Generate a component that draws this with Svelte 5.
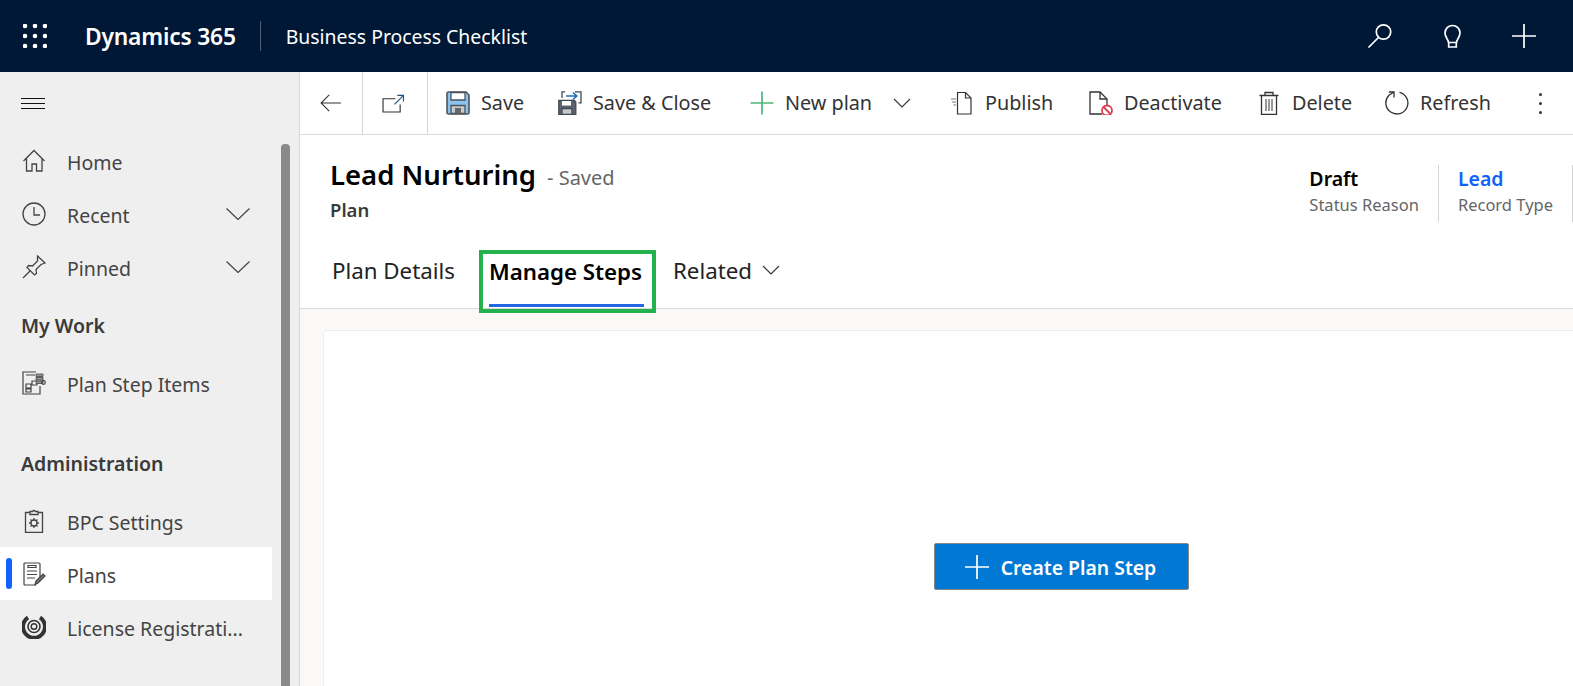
<script>
  // w = width of the toolbar button, so the labels land where the ribbon puts them
  const tools = [
    { id: 'save', label: 'Save', w: 112 },
    { id: 'saveclose', label: 'Save & Close', w: 192 },
    { id: 'plus', label: 'New plan', w: 200, caret: true },
    { id: 'publish', label: 'Publish', w: 139 },
    { id: 'deactivate', label: 'Deactivate', w: 168 },
    { id: 'delete', label: 'Delete', w: 128 },
    { id: 'refresh', label: 'Refresh', w: 120 }
  ];
</script>

{#snippet toolIcon(id)}
  <svg class="ticon" viewBox="0 0 24 24" fill="none" stroke="#333" stroke-width="1.3">
    {#if id === 'save'}
      <path d="M1 2.500Q1 1 2.500 1H20l3 3v17.500q0 1.500-1.500 1.500H2.500Q1 23 1 21.500Z" fill="#8cc3ee" stroke="#4a545e" stroke-width="1.600" />
      <path d="M5 1.500h14v7.500H5z" fill="#fff" stroke="#4a545e" />
      <path d="M5 22.500v-8h14v8z" fill="#c9c9c9" stroke="#4a545e" />
      <path d="M9 17h6v5.500H9z" fill="#666" stroke="none" />
    {:else if id === 'saveclose'}
      <path d="M0.800 9.500h15.500l1.500 1.500v12.500H0.800z" fill="#5d6670" stroke="#3f4a55" />
      <path d="M4 10h9v4.500H4z" fill="#fff" stroke="none" />
      <path d="M4 23.500v-6h10v6z" fill="#c9c9c9" stroke="#3f4a55" />
      <path d="M4 7V0.800h3M17 0.800h6v11h-2.500" stroke="#3f4a55" />
      <path d="M8 5h10M15 1.500 18.800 5 15 8.500" stroke="#1f6fb5" stroke-width="1.600" />
    {:else if id === 'plus'}
      <path d="M12 0.500v23M0.500 12h23" stroke="#4cb878" stroke-width="1.700" />
    {:else if id === 'publish'}
      <path d="M7.500 1.500h8L21 7v16H7.500z" stroke-width="1.200" />
      <path d="M15.500 1.500V7H21" stroke-width="1.200" />
      <path d="M1 8h5M2 11h4M3.500 14H6" stroke-width="1" stroke="#777" />
    {:else if id === 'deactivate'}
      <path d="M13 23H1V1h10l7 7v8" stroke-width="1.300" />
      <path d="M11 1v7h7" stroke-width="1.300" />
      <circle cx="18" cy="19.500" r="5" fill="#fff" stroke="#d9414f" stroke-width="1.800" />
      <path d="m14.500 16 7 7" stroke="#d9414f" stroke-width="1.800" />
    {:else if id === 'delete'}
      <path d="M2.500 4.500h19M8 4.500V1.500h8v3M4.500 4.500v19h15v-19" stroke-width="1.300" />
      <path d="M9 8v12M12 8v12M15 8v12" stroke-width="1" />
    {:else if id === 'refresh'}
      <path d="M14.500 1.300a11 11 0 1 1-10.500 3L9 1" stroke-width="1.300" />
      <path d="M3.800 1H9v5.500" stroke-width="1.300" />
    {/if}
  </svg>
{/snippet}

<div class="page">
  <header class="topbar">
    <svg class="waffle" viewBox="0 0 24 24" fill="#fff">
      {#each [2, 12, 22] as y}
        {#each [2, 12, 22] as x}
          <circle cx={x} cy={y} r="2.300" />
        {/each}
      {/each}
    </svg>
    <span class="brand">Dynamics 365</span>
    <span class="sep"></span>
    <span class="appname">Business Process Checklist</span>
    <div class="topicons">
      <svg viewBox="0 0 26 26" fill="none" stroke="#fff" stroke-width="1.700">
        <circle cx="16.500" cy="9" r="7.200" />
        <path d="M11.500 14.500 1.500 24.500" />
      </svg>
      <svg viewBox="0 0 26 26" fill="none" stroke="#fff" stroke-width="1.700">
        <path d="M9.500 19.500c0-3-3.500-5-3.500-9.500a7.500 7.500 0 0 1 15 0c0 4.500-3.500 6.500-3.500 9.500zM9.700 19.500v4.500h7.600v-4.500" />
      </svg>
      <svg viewBox="0 0 26 26" fill="none" stroke="#fff" stroke-width="1.700">
        <path d="M13 1v24M1 13h24" />
      </svg>
    </div>
  </header>

  <div class="body">
    <nav class="side">
      <div class="burger"><span></span><span></span><span></span></div>
      <a class="row">
        <svg class="nicon" viewBox="0 0 24 24" fill="none" stroke="#444" stroke-width="1.300">
          <path d="M1.500 12 12 1.500 22.500 12M4.500 9.500V22H10v-7h4.500v7H20V9.500" />
        </svg>
        <span>Home</span>
      </a>
      <a class="row">
        <svg class="nicon" viewBox="0 0 24 24" fill="none" stroke="#444" stroke-width="1.300">
          <circle cx="12" cy="12" r="11" />
          <path d="M12 5v8h6" />
        </svg>
        <span>Recent</span>
        <svg class="chev" viewBox="0 0 24 12" fill="none" stroke="#444" stroke-width="1.200"><path d="m0.500 0.500 11.500 11 11.500-11" /></svg>
      </a>
      <a class="row">
        <svg class="nicon" viewBox="0 0 24 24" fill="none" stroke="#444" stroke-width="1.300">
          <path d="M15.500 1 23 8l-4 1.500-5 5 0.500 4-2 1.500L5 12.500 6.500 10.500l4 .500 5-5zM8 16 1 23" />
        </svg>
        <span>Pinned</span>
        <svg class="chev" viewBox="0 0 24 12" fill="none" stroke="#444" stroke-width="1.200"><path d="m0.500 0.500 11.500 11 11.500-11" /></svg>
      </a>

      <h3 class="group first">My Work</h3>
      <a class="row">
        <svg class="nicon" viewBox="0 0 24 24" fill="none" stroke="#444" stroke-width="1.200">
          <path d="M18 15v8H1V1h13" />
          <path d="M4 4h9M4 13h5v4H4zM10 10h5v4h-5zM4 18h5v3H4z" />
          <path d="M14 3h7v2.500h-7zM14 6.500h7V9h-7zM14 10h7v2.500h-7z" fill="#999" stroke-width="0.800" />
          <circle cx="21.500" cy="11.500" r="1.800" />
        </svg>
        <span>Plan Step Items</span>
      </a>

      <h3 class="group second">Administration</h3>
      <a class="row">
        <svg class="nicon" viewBox="0 0 24 24" fill="none" stroke="#444" stroke-width="1.300">
          <path d="M7.500 3.500H3.500v20h17v-20h-4M8 5.500V2.500h2.500q1.500-2 3 0H16v3z" />
          <circle cx="12" cy="14" r="3" />
          <path d="M12 9v2M12 17v2M7 14h2M15 14h2M8.500 10.500l1.500 1.500M14 16l1.500 1.500M15.500 10.500 14 12M10 16l-1.500 1.500" />
        </svg>
        <span>BPC Settings</span>
      </a>
      <a class="row active">
        <i class="marker"></i>
        <svg class="nicon" viewBox="0 0 24 24" fill="none" stroke="#444" stroke-width="1.200">
          <path d="M14 23H3q-1 0-1-1V2q0-1 1-1h14q1 0 1 1v13" />
          <path d="M6 3.500h8v2H6zM5 9h10M5 12.500h10M5 16h8" />
          <path d="m13 22.500 1-3.500 7-7 2 2-7 7z" fill="#777" />
        </svg>
        <span>Plans</span>
      </a>
      <a class="row">
        <svg class="nicon" viewBox="0 0 24 24" fill="none">
          <path d="M6 2.500a11 11 0 1 0 12 0" stroke="#333" stroke-width="4" />
          <circle cx="12" cy="11.500" r="6" stroke="#333" stroke-width="1.600" />
          <circle cx="12" cy="11.500" r="2.800" stroke="#333" stroke-width="1.400" />
        </svg>
        <span>License Registrati...</span>
      </a>
      <div class="thumb"></div>
    </nav>

    <main class="main">
      <div class="toolbar">
        <button class="nav back">
          <svg viewBox="0 0 24 20" fill="none" stroke="#333" stroke-width="1.200" width="22" height="18"><path d="M23 10H1M10 1 1 10l9 9" /></svg>
        </button>
        <button class="nav popout">
          <svg viewBox="0 0 24 20" fill="none" stroke="#333" stroke-width="1.200" width="23" height="19"><path d="M14 5H1v14h18v-8" /><path d="M13 11 22 2" stroke="#1f4f7e" /><path d="M16 1.500h6.500V8" stroke="#1f4f7e" /></svg>
        </button>
        <div class="tools">
          {#each tools as t}
            <button class="tool" style="width: {t.w}px">
              {@render toolIcon(t.id)}
              <span>{t.label}</span>
              {#if t.caret}
                <svg class="caret" viewBox="0 0 18 10" fill="none" stroke="#333" stroke-width="1.100"><path d="m1 1 8 8 8-8" /></svg>
              {/if}
            </button>
          {/each}
        </div>
        <div class="more"><i></i><i></i><i></i></div>
      </div>

      <section class="formhead">
        <div class="titles">
          <div class="titleline"><h1>Lead Nurturing</h1><span class="saved">- Saved</span></div>
          <div class="entity">Plan</div>
        </div>
        <div class="fields">
          <div class="field">
            <strong>Draft</strong>
            <span>Status Reason</span>
          </div>
          <div class="field">
            <strong class="link">Lead</strong>
            <span>Record Type</span>
          </div>
        </div>
      </section>

      <div class="tabs">
        <div class="tab">Plan Details</div>
        <div class="tab current">Manage Steps<b></b></div>
        <div class="tab related">Related
          <svg viewBox="0 0 18 10" fill="none" stroke="#333" stroke-width="1.100" width="18" height="10"><path d="m1 1 8 8 8-8" /></svg>
        </div>
      </div>

      <div class="canvas">
        <div class="card">
          <button class="create">
            <svg viewBox="0 0 24 24" fill="none" stroke="#fff" stroke-width="1.700" width="24" height="24"><path d="M12 0v24M0 12h24" /></svg>
            <span>Create Plan Step</span>
          </button>
        </div>
      </div>
    </main>
  </div>
</div>

<style>
  :global(body) {
    margin: 0;
    overflow: hidden;
    font-family: "Noto Sans", "Open Sans", sans-serif;
  }
  .page {
    width: 1573px;
    height: 686px;
    display: flex;
    flex-direction: column;
    overflow: hidden;
  }
  .topbar {
    height: 72px;
    flex: none;
    background: #001836;
    color: #fff;
    display: flex;
    align-items: center;
  }
  .waffle {
    width: 24px;
    height: 24px;
    margin-left: 23px;
    margin-right: 38px;
  }
  .brand {
    font-size: 22.800px;
    font-weight: 600;
    letter-spacing: -0.2px;
  }
  .sep {
    width: 1px;
    height: 30px;
    background: #4d5d74;
    margin: 0 25px 0 24px;
  }
  .appname {
    font-size: 19.400px;
  }
  .topicons {
    margin-left: auto;
    display: flex;
    gap: 46px;
    margin-right: 36px;
  }
  .topicons svg {
    width: 26px;
    height: 26px;
  }
  .body {
    flex: 1;
    display: flex;
    min-height: 0;
  }
  .side {
    width: 299px;
    flex: none;
    background: #efefef;
    border-right: 1px solid #d8d8d8;
    position: relative;
    color: #444;
  }
  .burger {
    height: 62px;
    padding-left: 21px;
    display: flex;
    flex-direction: column;
    justify-content: center;
    gap: 4px;
  }
  .burger span {
    display: block;
    width: 24px;
    height: 1px;
    background: #111;
  }
  .row {
    height: 53px;
    width: 272px;
    display: flex;
    align-items: center;
    font-size: 19.500px;
    position: relative;
    color: #444;
  }
  .row span {
    padding-top: 3px;
  }
  .nicon {
    width: 24px;
    height: 24px;
    margin-left: 22px;
    margin-right: 21px;
    flex: none;
  }
  .chev {
    width: 24px;
    height: 12px;
    margin-left: auto;
    margin-right: 22px;
  }
  .group {
    margin: 0;
    font-size: 19.500px;
    font-weight: 600;
    color: #3a3a3a;
    padding-left: 21px;
    line-height: 27px;
  }
  .first {
    padding-top: 19px;
    padding-bottom: 17px;
  }
  .second {
    padding-top: 41px;
    padding-bottom: 17px;
  }
  .active {
    background: #fff;
  }
  .marker {
    position: absolute;
    left: 6px;
    top: 11px;
    width: 6px;
    height: 31px;
    border-radius: 3px;
    background: #0f62fe;
  }
  .thumb {
    position: absolute;
    left: 281px;
    top: 72px;
    bottom: -4px;
    width: 9px;
    border-radius: 4px 4px 0 0;
    background: #8a8a8a;
  }
  .main {
    flex: 1;
    min-width: 0;
    display: flex;
    flex-direction: column;
    background: #fff;
  }
  button {
    font: inherit;
    background: none;
    border: 0;
    padding: 0;
    color: inherit;
  }
  .toolbar {
    height: 62px;
    flex: none;
    box-sizing: content-box;
    border-bottom: 1px solid #dcdcdc;
    display: flex;
    align-items: stretch;
    color: #333;
  }
  .nav {
    display: flex;
    align-items: center;
    justify-content: center;
    border-right: 1px solid #d4d4d4;
  }
  .back {
    width: 63px;
  }
  .popout {
    width: 65px;
    padding-right: 3px;
  }
  .tools {
    display: flex;
    padding-left: 18px;
  }
  .tool {
    display: flex;
    align-items: center;
    font-size: 19.800px;
    white-space: nowrap;
  }
  .tool span {
    padding-bottom: 2px;
  }
  .ticon {
    width: 24px;
    height: 24px;
    margin-right: 11px;
    flex: none;
  }
  .caret {
    width: 18px;
    height: 10px;
    margin-left: 21px;
  }
  .more {
    margin-left: auto;
    margin-right: 31px;
    display: flex;
    flex-direction: column;
    justify-content: center;
    gap: 6px;
  }
  .more i {
    width: 3px;
    height: 3px;
    border-radius: 50%;
    background: #333;
  }
  .formhead {
    height: 115px;
    flex: none;
    display: flex;
    justify-content: space-between;
    padding-left: 30px;
    box-sizing: border-box;
  }
  .titleline {
    display: flex;
    align-items: baseline;
    gap: 11px;
    margin-top: 21px;
  }
  h1 {
    margin: 0;
    font-size: 27.500px;
    font-weight: 600;
    line-height: 38px;
    color: #000;
  }
  .saved {
    font-size: 20px;
    color: #666;
  }
  .entity {
    font-size: 18.500px;
    font-weight: 600;
    color: #3a3a3a;
    line-height: 24px;
    margin-top: 4px;
  }
  .fields {
    display: flex;
    margin-top: 30px;
    height: 57px;
  }
  .field {
    display: flex;
    flex-direction: column;
    box-sizing: border-box;
    padding: 1px 19px 0;
    border-right: 1px solid #d4d4d4;
    font-size: 16.500px;
    color: #666;
    line-height: 26px;
  }
  .field strong {
    font-size: 19.500px;
    font-weight: 600;
    color: #000;
  }
  .field strong.link {
    color: #0f62fe;
  }
  .tabs {
    height: 59px;
    flex: none;
    display: flex;
    box-sizing: border-box;
    align-items: stretch;
    border-bottom: 1px solid #d8d8d8;
    padding-left: 32px;
    font-size: 22.300px;
    color: #222;
  }
  .tab {
    display: flex;
    align-items: center;
    padding-bottom: 18px;
    white-space: nowrap;
  }
  .current {
    position: relative;
    z-index: 1;
    margin-left: 24px;
    padding: 0 0 20px 10px;
    font-weight: 600;
    color: #000;
    outline: 4px solid #22b14c;
    outline-offset: -4px;
    height: 63px;
    box-sizing: border-box;
    width: 177px;
  }
  .current b {
    position: absolute;
    left: 10px;
    right: 12px;
    bottom: 6px;
    height: 3px;
    background: #2266e3;
  }
  .related {
    margin-left: 17px;
    gap: 10px;
  }
  .canvas {
    flex: 1;
    min-height: 0;
    background: #faf9f8;
    padding: 21px 0 0 23px;
  }
  /* card runs past the window, so the button centres on its full size */
  .card {
    width: 1477px;
    height: 473px;
    box-sizing: border-box;
    background: #fff;
    border: 1px solid #eeecea;
    border-radius: 4px 0 0 0;
    display: flex;
    justify-content: center;
    align-items: center;
  }
  .create {
    display: flex;
    align-items: center;
    justify-content: center;
    gap: 12px;
    width: 255px;
    height: 47px;
    padding-right: 2px;
    background: #0078d4;
    border: 1px solid #8a8886;
    border-radius: 2px;
    color: #fff;
    font-size: 19.400px;
    font-weight: 600;
  }
  .create span {
    padding-top: 2px;
  }
</style>
